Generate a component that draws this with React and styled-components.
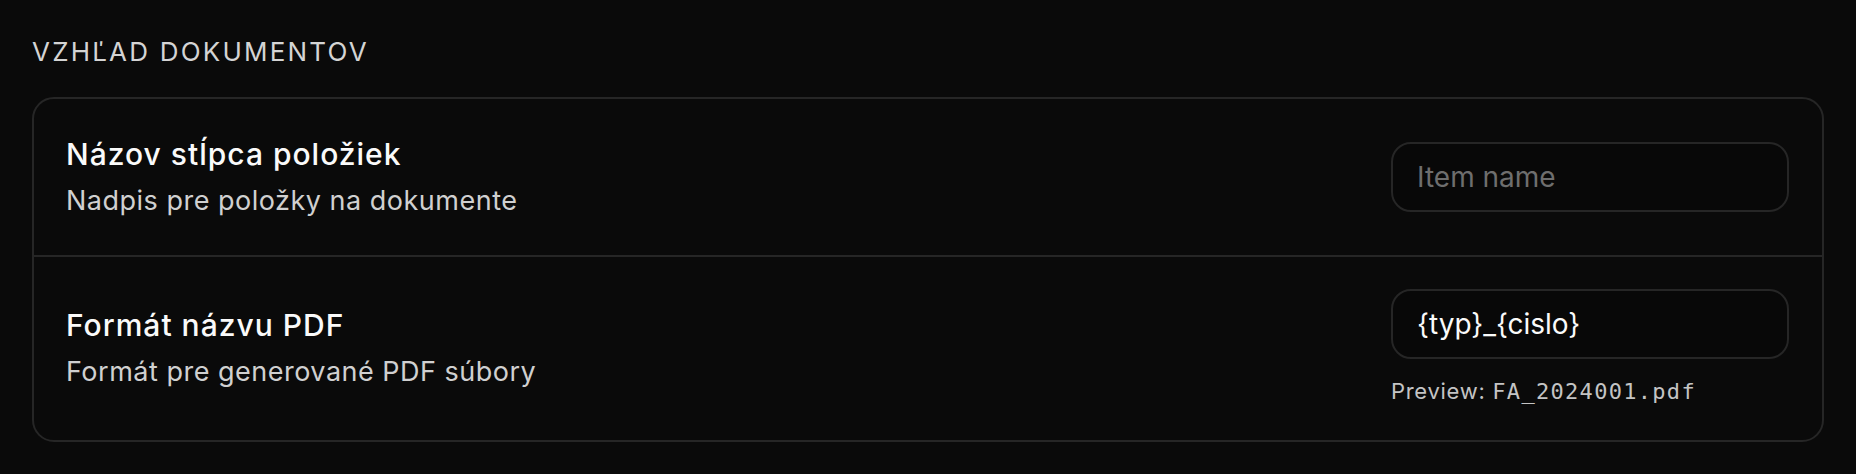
import styled, { createGlobalStyle } from "styled-components"

const Global = createGlobalStyle`
  html, body {
    margin: 0;
    background: #0a0a0a;
  }
  body {
    font-family: Inter, "Noto Sans", sans-serif;
    color: #fafafa;
  }
`

const Page = styled.div`
  padding: 32px 32px 30px;
`

const Heading = styled.h2`
  margin: 0 0 26px;
  font-size: 26px;
  line-height: 39px;
  font-weight: 400;
  letter-spacing: 2.2px;
  text-transform: uppercase;
  color: #d4d4d4;
`

const Card = styled.div`
  border: 2px solid #262626;
  border-radius: 22px;
  overflow: hidden;
`

const Row = styled.div`
  display: flex;
  align-items: center;
  justify-content: space-between;
  padding: ${p => p.$pad || "33px"} 33px ${p => p.$pad || "33px"} 32px;
  & + & {
    border-top: 2px solid #262626;
  }
`

const Label = styled.div`
  display: flex;
  flex-direction: column;
  gap: 5px;
`

const Title = styled.div`
  font-size: 30px;
  line-height: 44px;
  font-weight: 500;
  letter-spacing: 1px;
  color: #fafafa;
`

const Desc = styled.div`
  font-size: 27px;
  line-height: 40.5px;
  letter-spacing: 0.5px;
  color: #d0d0d0;
`

const Field = styled.div`
  display: flex;
  flex-direction: column;
  gap: 16px;
  width: 398px;
`

const Input = styled.input`
  box-sizing: border-box;
  width: 100%;
  height: 70px;
  padding: 0 24px;
  border: 2px solid #262626;
  border-radius: 20px;
  background: #080808;
  color: #fafafa;
  font-family: Inter, "Noto Sans", sans-serif;
  font-size: 28px;
  outline: none;
  &::placeholder {
    color: #6e6e6e;
  }
`

const Hint = styled.div`
  font-size: 22px;
  line-height: 33px;
  letter-spacing: 0.7px;
  color: #c4c4c4;
`

const Code = styled.code`
  font-family: "DejaVu Sans Mono", "Liberation Mono", monospace;
  font-size: 22px;
  letter-spacing: 1.3px;
`

export default function App() {
  return (
    <>
      <Global />
      <Page>
        <Heading>Vzhľad dokumentov</Heading>
        <Card>
          <Row>
            <Label>
              <Title>Názov stĺpca položiek</Title>
              <Desc>Nadpis pre položky na dokumente</Desc>
            </Label>
            <Field>
              <Input placeholder="Item name" />
            </Field>
          </Row>
          <Row $pad="32px">
            <Label>
              <Title>Formát názvu PDF</Title>
              <Desc>Formát pre generované PDF súbory</Desc>
            </Label>
            <Field>
              <Input defaultValue="{typ}_{cislo}" />
              <Hint>
                Preview: <Code>FA_2024001.pdf</Code>
              </Hint>
            </Field>
          </Row>
        </Card>
      </Page>
    </>
  )
}
